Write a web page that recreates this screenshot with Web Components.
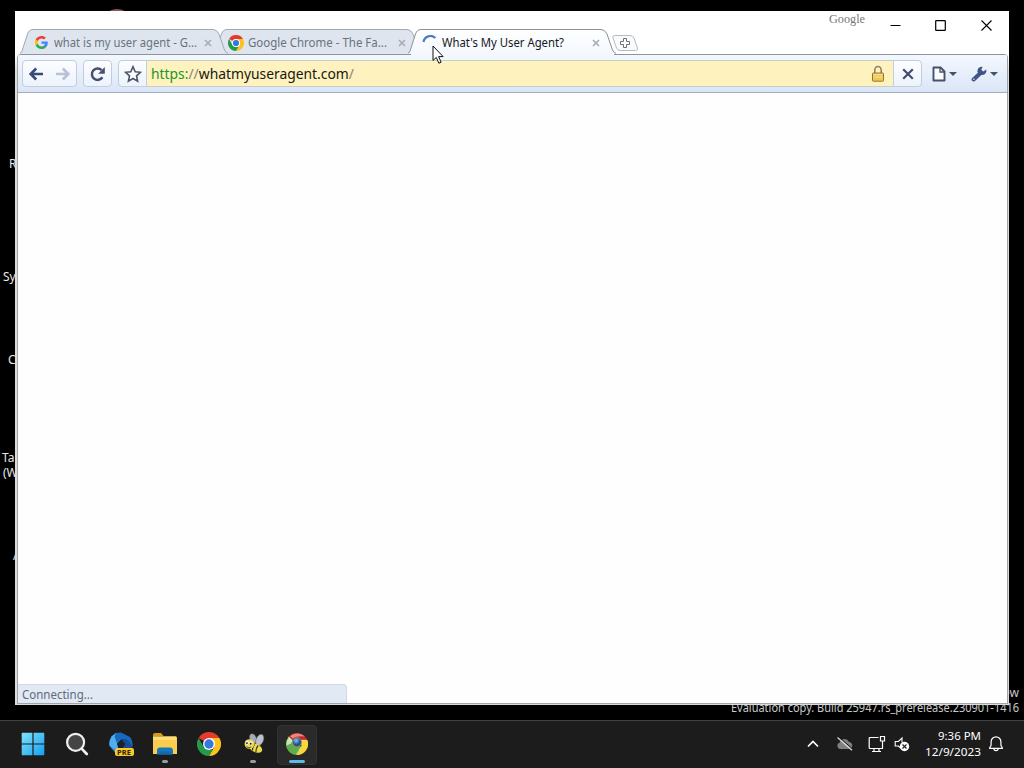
<!DOCTYPE html>
<html lang="en">
<head>
<meta charset="utf-8">
<title>What's My User Agent?</title>
<style>
  html, body { margin: 0; height: 100%; overflow: hidden; background: #000; }
  body { font-family: "Noto Sans", "Open Sans", sans-serif; font-size: 12px; }
</style>
</head>
<body>
<desktop-shell></desktop-shell>

<script>
const define = (name, html, setup) => {
  const template = document.createElement('template');
  template.innerHTML = html;
  customElements.define(name, class extends HTMLElement {
    constructor() {
      super();
      this.attachShadow({ mode: 'open' });
      this.shadowRoot.appendChild(template.content.cloneNode(true));
    }
    connectedCallback() {
      if (setup) setup(this, this.shadowRoot);
    }
  });
};

const ICONS = {
  google: ['0 0 48 48', `<path fill="#ea4335" d="M24 9.5c3.54 0 6.71 1.22 9.21 3.6l6.85-6.85C35.9 2.38 30.47 0 24 0 14.62 0 6.51 5.38 2.56 13.22l7.98 6.19C12.43 13.72 17.74 9.5 24 9.5z"/><path fill="#4285f4" d="M46.98 24.55c0-1.57-.15-3.09-.38-4.55H24v9.02h12.94c-.58 2.96-2.26 5.48-4.78 7.18l7.73 6c4.51-4.18 7.09-10.36 7.09-17.65z"/><path fill="#fbbc05" d="M10.53 28.59a14.5 14.5 0 0 1 0-9.18l-7.98-6.19a24 24 0 0 0 0 21.56l7.98-6.19z"/><path fill="#34a853" d="M24 48c6.48 0 11.93-2.13 15.89-5.81l-7.73-6c-2.15 1.45-4.92 2.3-8.16 2.3-6.26 0-11.57-4.22-13.47-9.91l-7.98 6.19C6.51 42.62 14.62 48 24 48z"/>`],
  chrome: ['0 0 48 48', `<path fill="#e33b2e" d="M24 24 3.2 12A24 24 0 0 1 44.8 12z"/><path fill="#fcc31e" d="M24 12H44.8A24 24 0 0 1 24 48l10.4-18z"/><path fill="#259b48" d="M3.2 12 13.6 30 24 36l7 .1L24 48A24 24 0 0 1 3.2 12z"/><circle cx="24" cy="24" r="12" fill="#fff"/><circle cx="24" cy="24" r="9.3" fill="#3478e0"/>`],
  oldchrome: ['0 0 48 48', `<defs><radialGradient id="b" cx=".4" cy=".3"><stop offset="0" stop-color="#8fc4e4"/><stop offset="1" stop-color="#1f5288"/></radialGradient></defs><path fill="#c9292b" d="M24 24 6 8A24 24 0 0 1 46.5 16L36 19z"/><path fill="#f7d836" d="M30 15l17 1A24 24 0 0 1 23 48L34 28z"/><path fill="#62ad4b" d="M24 24 6 8A24 24 0 0 0 23 48L33 30z"/><path fill="#c9e3b8" d="M7 9A24 24 0 0 0 1 27l10-4 3-8z"/><path fill="#e98780" d="M9 7C18-1 33-1 41 8 31 6 22 7 15 12z"/><path d="M5 8l12 17M46 16H29M23 47l10-17" stroke="#f2ebc4" stroke-width="1.6"/><circle cx="24" cy="20" r="10.5" fill="#8d8088"/><circle cx="24" cy="20" r="9" fill="url(#b)"/>`],
  spinner: ['0 0 16 16', `<path d="M1.5 7A7 7 0 0 1 13.3 3" fill="none" stroke="#4c7bc0" stroke-width="2.2"/>`],
  close: ['0 0 8 8', `<path d="M1 1l6 6M7 1 1 7" stroke="#a9adb3" stroke-width="1.7"/>`],
  back: ['0 0 16 16', `<path d="M8.2 2.5 2.7 8l5.5 5.5M3 8h12" fill="none" stroke="#3b4a75" stroke-width="2.7"/>`],
  forward: ['0 0 16 16', `<path d="M7.8 2.5 13.3 8l-5.5 5.5M13 8H1" fill="none" stroke="#b9c1d8" stroke-width="2.7"/>`],
  reload: ['0 0 16 16', `<path d="M12.4 11.3A5.7 5.7 0 1 1 11.5 4" fill="none" stroke="#47516b" stroke-width="2.5"/><path d="M14.8 1v6.7H8.2z" fill="#47516b"/>`],
  star: ['0 0 18 18', `<path d="M9 1.7l2.2 5 5.2.6-3.9 3.6 1.1 5.3L9 13.5l-4.6 2.7 1.1-5.3-3.9-3.6 5.2-.6z" fill="#fff" stroke="#4b556d" stroke-width="1.6"/>`],
  lock: ['0 0 14 18', `<path d="M3.8 8V5a3.2 3.5 0 0 1 6.4 0v3" fill="none" stroke="#8e8465" stroke-width="1.6"/><rect x="1.5" y="8" width="11" height="8.2" rx=".7" fill="#edc85a" stroke="#9a762c"/><path d="M2.5 9.5h9M2.5 12h9" stroke="#f9e298"/>`],
  stop: ['0 0 12 12', `<path d="M1.2 1.2l9.6 9.6m0-9.6-9.6 9.6" stroke="#414d6c" stroke-width="2.2"/>`],
  page: ['0 0 14 16', `<path d="M1.5 1.5H8.5L12.5 5.5v9H1.5z" fill="#fbfdff" stroke="#46516b" stroke-width="1.9" stroke-linejoin="round"/><path d="M8 1.5v4.5h4.5" fill="none" stroke="#46516b" stroke-width="1.3"/>`],
  wrench: ['0 0 16 16', `<path d="M2.6 13.5 9 7.5" stroke="#3f5587" stroke-width="4" stroke-linecap="round"/><path d="M11.7.7A4.6 4.6 0 0 0 6.4 5.5a4.6 4.6 0 0 0 9-.3l-.2-1.7-2.9 2-2.1-1.7z" fill="#3f5587"/><circle cx="2.9" cy="13.2" r=".8" fill="#dce8f8"/>`],
  caret: ['0 0 8 4', `<path d="M0 0h8L4 4z" fill="#46516b"/>`],
  minimize: ['0 0 11 11', `<path d="M.5 5.5h10" stroke="#000"/>`],
  maximize: ['0 0 11 11', `<rect x=".7" y=".7" width="9.6" height="9.6" rx=".4" fill="none" stroke="#000" stroke-width="1.2"/>`],
  exit: ['0 0 11 11', `<path d="M.5.5l10 10m0-10-10 10" stroke="#000" stroke-width="1.1"/>`],
  windows: ['0 0 24 24', `<defs><linearGradient id="w" x2="1" y2="1" gradientUnits="userSpaceOnUse" gradientTransform="scale(24)"><stop stop-color="#86e4fb"/><stop offset="1" stop-color="#109df0"/></linearGradient></defs><path fill="url(#w)" d="M.7 1.4q0-.7.7-.7h10v10.7H.7zM12.6.7h10q.7 0 .7.7v10H12.6zM.7 12.6h10.7v10.7h-10q-.7 0-.7-.7zM12.6 12.6h10.7v10q0 .7-.7.7h-10z"/>`],
  search: ['0 0 24 24', `<circle cx="10.6" cy="10.3" r="8.5" fill="#454545" stroke="#efefef" stroke-width="2.2"/><path d="M16.6 16.6l5.2 5.4" stroke="#efefef" stroke-width="2.7" stroke-linecap="round"/>`],
  copilot: ['0 0 24 24', `<path d="M7 1 2.5 4.5Q-.5 9 .5 14l6 7 7 2 3-4-7-3-1.5-4 4-5z" fill="#2b8fe2"/><path d="M7 1 2.500 4.500Q0 9 .5 13l4 4 4-1.500-.5-4 4-4z" fill="#51aeee"/><path d="M12 .5 7 1 5.500 4.500 8 11.500l4-4.500 5 2 6 7q2-6-2-11z" fill="#1769bd"/><path d="M17 7l-5 0 4 5-3 5 4 3q4-1 6-5-2-6-6-8z" fill="#184b92"/><path d="M12 7.5l4.500 4.500-4 5-4.500-5z" fill="#1a2230"/>`],
  folder: ['0 0 26 24', `<path d="M1 3q0-2 2-2h6l2.500 3H1z" fill="#d79a17"/><path d="M1 4.500h23q1 0 1 1V22H1z" fill="#fbcc4d"/><path d="M1 4.500h23V8H1z" fill="#ffdc72"/><path d="M5 22.500v-4q0-3 3-3h10q3 0 3 3v4z" fill="#1479bd"/><path d="M7.500 22.500v-3h11v3z" fill="#1268a8"/>`],
  bee: ['0 0 24 24', `<g stroke="#55586a" stroke-width=".5"><ellipse cx="11" cy="6" rx="3.6" ry="5.5" transform="rotate(-24 11 6)" fill="#a7a9b5"/><ellipse cx="18.5" cy="7.5" rx="4" ry="6.5" transform="rotate(24 18 7)" fill="#bdc0cc"/></g><ellipse cx="14" cy="16.500" rx="7.5" ry="4.5" transform="rotate(24 14 16)" fill="#eadb4f"/><path d="M12.5 12.5q-2.5 3-2 6.5M16.5 13.5q-2.5 3-2.5 7.5" fill="none" stroke="#302e1a" stroke-width="1.3"/><circle cx="7" cy="12" r="5.3" fill="#ead953"/><ellipse cx="4.5" cy="10.5" rx="1.8" ry="2.3" fill="#f5f5e4"/><ellipse cx="8.5" cy="11.2" rx="1.8" ry="2.3" fill="#f5f5e4"/><circle cx="4.3" cy="11" r="1" fill="#111"/><circle cx="8.4" cy="11.7" r="1" fill="#111"/><path d="M3.5 15q3 2 5.5.2" fill="none" stroke="#332d16" stroke-width=".8"/>`],
  chevron: ['0 0 12 8', `<path d="M1 6.5l5-5 5 5" fill="none" stroke="#fff" stroke-width="1.7"/>`],
  cloud: ['0 0 18 14', `<path d="M4 12a3.4 3.4 0 0 1-.2-6.6A5 5 0 0 1 13 4.9 3.7 3.7 0 0 1 14 12z" fill="#808080"/><path d="M3.2.3 17.300 12.5" stroke="#1c1c1c" stroke-width="1"/><path d="M1.5.5 16 13.3" stroke="#ddd" stroke-width="1.2"/>`],
  network: ['0 0 18 18', `<path d="M10.5 2.5H2q-.8 0-.8.8v9.4q0 .8.8.8h12.5V8M4 16.5h9M6 13.5v3m5-3v3M12.5 1.5H16.5v4.5h-4zM14.5 6v3" fill="none" stroke="#fff" stroke-width="1.2"/>`],
  speaker: ['0 0 16 16', `<path d="M6.5 12 4.5 10H1.2V5.5h3.2L8 2v4.5" fill="none" stroke="#fff" stroke-width="1.1"/><circle cx="10.5" cy="10.5" r="4.7" fill="#fff"/><path d="M8.5 8.5l4 4m0-4-4 4" stroke="#1c1c1c" stroke-width="1.1"/>`],
  bell: ['0 0 16 18', `<path d="M8 1.8a4.9 4.9 0 0 0-4.9 4.9v3.5L1.5 13.3h13l-1.6-3.1V6.7A4.9 4.9 0 0 0 8 1.8zM5.9 13.5a2.1 2.1 0 0 0 4.2 0" fill="none" stroke="#fff" stroke-width="1.2" stroke-linejoin="round"/>`],
  cursor: ['0 0 12 20', `<path d="M1 1v14.5l3.3-3.1 2.5 5.8 2.3-1-2.500-5.6h4.500z" fill="#fff" stroke="#111" stroke-linejoin="round"/>`]
};

// <ui-icon name="star" w="18" h="18">
define('ui-icon', `
<style>
  :host { display: block; flex: none; line-height: 0; }
</style>
`, (host, root) => {
  const [box, body] = ICONS[host.getAttribute('name')];
  const w = host.getAttribute('w');
  const h = host.getAttribute('h') || w;
  root.innerHTML += `<svg width="${w}" height="${h}" viewBox="${box}">${body}</svg>`;
});

// A single line of text squeezed or stretched to a fixed width
define('fit-label', `
<style>
  :host { display: block; flex: none; white-space: nowrap; }
  span { display: inline-block; transform-origin: 0 50%; }
</style>
<span><slot></slot></span>
`, (host, root) => {
  const width = Number(host.getAttribute('width'));
  const span = root.querySelector('span');
  host.style.width = width + 'px';
  span.style.transform = `scaleX(${width / span.getBoundingClientRect().width})`;
});

define('browser-tab', `
<style>
  :host {
    display: flex;
    align-items: center;
    position: relative;
    box-sizing: border-box;
    width: 208px;
    height: 25px;
    margin-right: -14px;
    padding: 2px 16px 0 14px;
    color: #6a727f;
  }
  :host([active]) { color: #16181c; z-index: 5; }
  .shape { position: absolute; inset: 0; fill: #dee5ee; stroke: #a2a8b1; }
  :host([active]) .shape { fill: url(#g); stroke: #8a9199; }
  .icon { width: 15px; height: 17px; display: flex; align-items: center; justify-content: center; margin-right: 5px; z-index: 1; }
  .text { flex: 1; z-index: 1; }
  ui-icon { z-index: 1; }
</style>
<svg class="shape" width="208" height="25">
  <defs><linearGradient id="g" x2="0" y2="1"><stop stop-color="#fff"/><stop offset="1" stop-color="#f3f8fe"/></linearGradient></defs>
  <path d="M-1 25.5Q1 24 2 22L7.5 5Q9 .5 13 .5H193Q197 .5 199 5L204.5 21Q206 24.5 209 24.5V26H-1z"/>
</svg>
<div class="icon"><slot name="icon"></slot></div>
<div class="text"><slot></slot></div>
<ui-icon name="close" w="8"></ui-icon>
`);

define('tab-strip', `
<style>
  :host { display: flex; align-items: flex-end; height: 44px; padding-left: 3px; font-size: 12px; box-sizing: border-box; }
  .one { z-index: 3; }
  .two { z-index: 2; }
  .add { display: block; margin: 0 0 2px 9px; }
</style>
<browser-tab class="one"><ui-icon slot="icon" name="google" w="13"></ui-icon><fit-label width="143">what is my user agent - G...</fit-label></browser-tab>
<browser-tab class="two"><ui-icon slot="icon" name="chrome" w="16"></ui-icon><fit-label width="139">Google Chrome - The Fa...</fit-label></browser-tab>
<browser-tab active><ui-icon slot="icon" name="spinner" w="16"></ui-icon><fit-label width="122">What's My User Agent?</fit-label></browser-tab>
<svg class="add" width="28" height="18">
  <path d="M4 1.5H19Q22 1.5 23 4L26.5 14Q27 16.5 24.5 16.5H9Q6.5 16.5 5.5 14L2 4Q1 1.5 4 1.5z" fill="#f8fafc" stroke="#b6bac1"/>
  <path d="M12.5 4.5h3v3h3v3h-3v3h-3v-3h-3v-3h3z" fill="#fff" stroke="#6b7079"/>
</svg>
`);

define('caption-buttons', `
<style>
  :host { display: flex; position: absolute; top: 0; right: 17.5px; height: 28px; align-items: center; }
  .brand { font: 13px "Liberation Serif", serif; color: #777; margin: -12px 25px 0 0; }
  ui-icon + ui-icon { margin-left: 34.5px; }
</style>
<fit-label class="brand" width="36">Google</fit-label>
<ui-icon name="minimize" w="11"></ui-icon>
<ui-icon name="maximize" w="11"></ui-icon>
<ui-icon name="exit" w="11"></ui-icon>
`);

define('tool-button', `
<style>
  :host {
    display: flex;
    align-items: center;
    justify-content: center;
    box-sizing: border-box;
    height: 27px;
    border: 1px solid #c3cddd;
    border-radius: 4px;
    background: linear-gradient(#fcfdff, #edf3fc);
  }
</style>
<slot></slot>
`);

define('nav-toolbar', `
<style>
  :host {
    display: flex;
    align-items: center;
    box-sizing: border-box;
    height: 39px;
    padding: 0 9px 0 4px;
    border-top: 1px solid #8d949e;
    border-bottom: 1px solid #a3acb9;
    background: linear-gradient(#f3f8fe, #dae6f7);
  }
  .nav { width: 55px; margin-right: 6px; }
  .nav ui-icon + ui-icon { margin-left: 11px; }
  .reload { width: 29px; margin-right: 6px; }
  .star { width: 29px; border-radius: 4px 0 0 4px; }
  .stop { width: 29px; border-radius: 0 4px 4px 0; margin-right: 10px; }
  .url {
    display: flex;
    flex: 1;
    align-items: center;
    justify-content: space-between;
    box-sizing: border-box;
    height: 27px;
    padding: 0 8px 0 4px;
    border: solid #c9cdc8;
    border-width: 1px 0;
    background: #fef2bf;
    font-size: 14.5px;
    color: #181810;
  }
  .url fit-label { margin-top: -2px; }
  .secure { color: #259428; }
  .dim { color: #8b876f; }
  .menu { display: flex; align-items: center; gap: 3px; }
  .menu + .menu { margin-left: 14px; }
</style>
<tool-button class="nav"><ui-icon name="back" w="16"></ui-icon><ui-icon name="forward" w="16"></ui-icon></tool-button>
<tool-button class="reload"><ui-icon name="reload" w="16"></ui-icon></tool-button>
<tool-button class="star"><ui-icon name="star" w="18"></ui-icon></tool-button>
<div class="url">
  <fit-label width="203"><span class="secure">https:</span><span class="dim">//</span>whatmyuseragent.com<span class="dim">/</span></fit-label>
  <ui-icon name="lock" w="14" h="18"></ui-icon>
</div>
<tool-button class="stop"><ui-icon name="stop" w="12"></ui-icon></tool-button>
<div class="menu"><ui-icon name="page" w="14" h="16"></ui-icon><ui-icon name="caret" w="8" h="4"></ui-icon></div>
<div class="menu"><ui-icon name="wrench" w="16"></ui-icon><ui-icon name="caret" w="8" h="4"></ui-icon></div>
`);

define('status-bubble', `
<style>
  :host {
    display: block;
    position: absolute;
    left: 0;
    bottom: 0;
    box-sizing: border-box;
    width: 329px;
    height: 19px;
    padding-left: 4px;
    border: solid #cfd8e4;
    border-width: 1px 1px 0 0;
    border-radius: 0 4px 0 0;
    background: #e0e9f4;
    color: #606b7b;
    font-size: 12px;
    line-height: 20px;
  }
</style>
<slot></slot>
`);

define('browser-window', `
<style>
  :host {
    display: flex;
    flex-direction: column;
    position: absolute;
    left: 15px;
    top: 11px;
    width: 994px;
    height: 694px;
    box-sizing: border-box;
    padding: 0 1px 1px 2px;
    background: linear-gradient(#fff 44px, #dcdcdc 60px);
  }
  tab-strip { height: 43px; margin-left: -2px; padding-left: 5px; background: #fff; }
  .frame {
    display: flex;
    flex-direction: column;
    flex: 1;
    position: relative;
    border: solid #a3a3a6;
    border-width: 0 1px 1px;
    border-radius: 4px 4px 0 0;
    overflow: hidden;
    background: #fff;
  }
  /* The active tab runs into the toolbar */
  .seam { position: absolute; top: 0; left: 393px; width: 203px; height: 1px; background: #f3f8fe; }
  .page { flex: 1; background: #fefefe; }
</style>
<caption-buttons></caption-buttons>
<tab-strip></tab-strip>
<div class="frame">
  <nav-toolbar></nav-toolbar>
  <div class="seam"></div>
  <div class="page"></div>
  <status-bubble><fit-label width="71">Connecting...</fit-label></status-bubble>
</div>
`);

define('task-item', `
<style>
  :host { display: flex; align-items: center; justify-content: center; position: relative; width: 44px; height: 47px; }
  .tile { display: flex; align-items: center; justify-content: center; box-sizing: border-box; width: 40px; height: 40px; padding-bottom: 2px; border: 1px solid transparent; border-radius: 4px; }
  :host([active]) .tile { background: #2a2a2a; border-color: #313131; }
  :host([running])::after {
    content: "";
    position: absolute;
    left: 19px;
    bottom: 5px;
    width: 6px;
    height: 3px;
    border-radius: 2px;
    background: #9b9b9b;
  }
  :host([active])::after { left: 14px; width: 16px; background: #5db9e9; }
  .pre {
    position: absolute;
    left: 16px;
    top: 27px;
    width: 19px;
    height: 8px;
    border-radius: 2px;
    background: #f8c927;
    color: #292208;
    font: bold 7.5px/8px "Noto Sans", sans-serif;
    text-align: center;
  }
</style>
<div class="tile"><slot></slot></div>
`, (host, root) => {
  if (host.hasAttribute('badge')) {
    const badge = document.createElement('div');
    badge.className = 'pre';
    badge.textContent = host.getAttribute('badge');
    root.appendChild(badge);
  }
});

define('task-bar', `
<style>
  :host {
    display: flex;
    align-items: center;
    box-sizing: border-box;
    height: 48px;
    padding: 0 20px 0 10.5px;
    border-top: 1px solid #414141;
    background: #1c1c1c;
    color: #fff;
  }
  .tray { display: flex; align-items: center; margin: -1px 0 0 auto; }
  .clock { display: flex; flex-direction: column; align-items: flex-end; margin: 0 7px 0 15px; font-size: 11.5px; line-height: 16px; }
</style>
<task-item><ui-icon name="windows" w="24"></ui-icon></task-item>
<task-item><ui-icon name="search" w="24"></ui-icon></task-item>
<task-item badge="PRE"><ui-icon name="copilot" w="24"></ui-icon></task-item>
<task-item running><ui-icon name="folder" w="26" h="24"></ui-icon></task-item>
<task-item><ui-icon name="chrome" w="24"></ui-icon></task-item>
<task-item running><ui-icon name="bee" w="22" style="margin-left: 3px"></ui-icon></task-item>
<task-item running active><ui-icon name="oldchrome" w="22"></ui-icon></task-item>
<div class="tray">
  <ui-icon name="chevron" w="12" h="8"></ui-icon>
  <ui-icon name="cloud" w="18" h="14" style="margin-left: 17px"></ui-icon>
  <ui-icon name="network" w="18" style="margin-left: 14px"></ui-icon>
  <ui-icon name="speaker" w="16" style="margin-left: 8px"></ui-icon>
  <div class="clock"><fit-label width="43">9:36 PM</fit-label><fit-label width="56">12/9/2023</fit-label></div>
  <ui-icon name="bell" w="16" h="18"></ui-icon>
</div>
`);

define('desktop-shell', `
<style>
  :host { display: flex; flex-direction: column; justify-content: flex-end; position: relative; width: 1024px; height: 768px; background: #000; overflow: hidden; }
  .label { position: absolute; color: #e8e8e8; font-size: 12px; line-height: 16px; }
  .bin { position: absolute; left: 104px; top: 9px; width: 26px; height: 20px; border-radius: 50%; background: #8d5a5c; }
  .build { right: 5px; top: 700px; color: #c9c9c9; }
  .edition { right: 5px; top: 685px; color: #c9c9c9; }
  .pointer { position: absolute; left: 432px; top: 45px; z-index: 10; }
</style>
<div class="bin"></div>
<div class="label" style="left: 9px; top: 156px">R</div>
<div class="label" style="left: 3px; top: 269px">Sy</div>
<div class="label" style="left: 8px; top: 352px">C</div>
<div class="label" style="left: 2px; top: 450px">Ta</div>
<div class="label" style="left: 3px; top: 465px">(W</div>
<div class="label" style="left: 13px; top: 548px">A</div>
<div class="label edition">ew</div>
<div class="label build"><fit-label width="288">Evaluation copy. Build 25947.rs_prerelease.230901-1416</fit-label></div>
<browser-window></browser-window>
<ui-icon class="pointer" name="cursor" w="12" h="20"></ui-icon>
<task-bar></task-bar>
`);
</script>
</body>
</html>
